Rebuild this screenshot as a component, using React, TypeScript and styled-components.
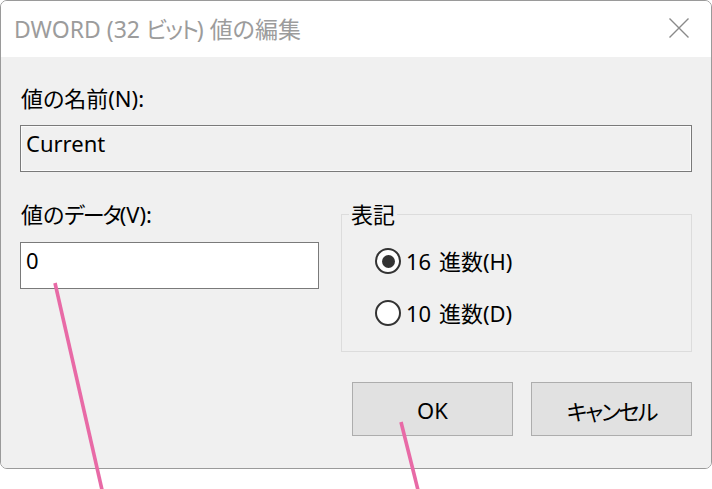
import React from 'react';
import styled, { createGlobalStyle } from 'styled-components';

const fontStack = `"Noto Sans", "Noto Sans CJK JP", sans-serif`;

const GlobalStyle = createGlobalStyle`
  html, body {
    margin: 0;
    padding: 0;
    background: #fff;
  }
  body {
    font-family: ${fontStack};
  }
`;

interface RadioProps {
  checked?: boolean;
}

interface FieldProps {
  readOnly?: boolean;
}

// 注釈線を重ねるための土台
const StyledPage = styled.div`
  position: relative;
  width: 712px;
  height: 489px;
  background: #fff;
  overflow: hidden;
`;

const StyledWindow = styled.div`
  box-sizing: border-box;
  width: 712px;
  height: 469px;
  border: 1px solid #9a9a9a;
  border-radius: 7px;
  overflow: hidden;
  display: flex;
  flex-direction: column;
  font-family: ${fontStack};
  font-size: 22px;
  font-feature-settings: "palt";
  color: #000;
`;

const StyledTitleBar = styled.div`
  flex: none;
  height: 56px;
  background: #fff;
  display: flex;
  align-items: center;
  justify-content: space-between;
  padding: 0 22px 0 13px;
`;

const StyledTitle = styled.span`
  color: #9c9c9c;
  font-size: 23px;
  line-height: 28px;
`;

// カタカナ部分の字詰め（Yu Gothic UI に近い幅にする）
const StyledKana = styled.span`
  letter-spacing: -2px;
`;

const StyledCloseButton = styled.span`
  display: flex;
  width: 20px;
  height: 20px;
  margin-top: -2px;
`;

const StyledBody = styled.div`
  flex: 1;
  background: #f0f0f0;
  padding: 27px 19px 0 19px;
  display: flex;
  flex-direction: column;
`;

const StyledLabel = styled.div`
  line-height: 28px;
  height: 28px;
  padding-left: 1px;
`;

const StyledField = styled.input<FieldProps>`
  box-sizing: border-box;
  display: block;
  width: 100%;
  height: 47px;
  margin: 0;
  margin-top: ${(props) => (props.readOnly ? '13px' : '14px')};
  padding: 0 5px 12px;
  border: 1px solid #7a7a7a;
  border-radius: 0;
  outline: none;
  background: ${(props) => (props.readOnly ? '#f0f0f0' : '#fff')};
  box-shadow: ${(props) => (props.readOnly ? 'inset 0 0 0 1px #fbfbfb' : 'none')};
  font: inherit;
  line-height: 28px;
  font-feature-settings: "palt";
  color: #000;
`;

const StyledColumns = styled.div`
  display: grid;
  grid-template-columns: 299px 351px;
  column-gap: 22px;
  align-items: start;
  margin-top: 28px;
`;

const StyledColumn = styled.div`
  display: flex;
  flex-direction: column;
`;

const StyledGroup = styled.fieldset`
  margin: 0;
  padding: 0;
  min-width: 0;
  border: 1px solid #dcdcdc;
`;

const StyledLegend = styled.legend`
  margin-left: 7px;
  padding: 0 2px;
  line-height: 28px;
`;

const StyledRadioList = styled.div`
  display: flex;
  flex-direction: column;
  gap: 24px;
  padding: 19px 0 24px 33px;
`;

const StyledRadioRow = styled.label`
  display: flex;
  align-items: center;
  gap: 5px;
  height: 28px;
  line-height: 28px;
  word-spacing: 2px;
`;

const StyledRadioMark = styled.span<RadioProps>`
  position: relative;
  flex: none;
  box-sizing: border-box;
  width: 26px;
  height: 26px;
  border: 2px solid #333;
  border-radius: 50%;
  background: #fff;

  &::after {
    content: '';
    display: ${(props) => (props.checked ? 'block' : 'none')};
    position: absolute;
    left: 50%;
    top: 50%;
    width: 13px;
    height: 13px;
    margin: -6.5px 0 0 -6.5px;
    border-radius: 50%;
    background: #333;
  }
`;

const StyledButtonRow = styled.div`
  display: flex;
  justify-content: flex-end;
  gap: 18px;
  margin-top: 30px;
`;

const StyledButton = styled.button`
  box-sizing: border-box;
  width: 161px;
  height: 54px;
  margin: 0;
  padding: 2px 0 0;
  border: 1px solid #adadad;
  border-radius: 0;
  background: #e1e1e1;
  font: inherit;
  font-feature-settings: "palt";
  color: #000;
`;

const StyledAnnotation = styled.svg`
  position: absolute;
  left: 0;
  top: 0;
  pointer-events: none;
`;

const CloseIcon = () => (
  <svg width='20' height='20' viewBox='0 0 20 20'>
    <path d='M0.5 0.5 L19.5 19.5 M19.5 0.5 L0.5 19.5' stroke='#8a8a8a' strokeWidth='1.4' fill='none' />
  </svg>
);

const Radio = ({ checked, label }: { checked?: boolean; label: string }) => (
  <StyledRadioRow>
    <StyledRadioMark checked={checked} />
    <span>{label}</span>
  </StyledRadioRow>
);

const App = () => {
  return (
    <>
      <GlobalStyle />
      <StyledPage>
        <StyledWindow>
          <StyledTitleBar>
            <StyledTitle>DWORD (32 <StyledKana>ビット</StyledKana>) 値の編集</StyledTitle>
            <StyledCloseButton>
              <CloseIcon />
            </StyledCloseButton>
          </StyledTitleBar>
          <StyledBody>
            <StyledLabel>値の名前(N):</StyledLabel>
            <StyledField readOnly value='Current' />
            <StyledColumns>
              <StyledColumn>
                <StyledLabel>値の<StyledKana>データ</StyledKana>(V):</StyledLabel>
                <StyledField value='0' onChange={() => undefined} />
              </StyledColumn>
              <StyledGroup>
                <StyledLegend>表記</StyledLegend>
                <StyledRadioList>
                  <Radio checked label='16 進数(H)' />
                  <Radio label='10 進数(D)' />
                </StyledRadioList>
              </StyledGroup>
            </StyledColumns>
            <StyledButtonRow>
              <StyledButton>OK</StyledButton>
              <StyledButton>
                <StyledKana>キャンセル</StyledKana>
              </StyledButton>
            </StyledButtonRow>
          </StyledBody>
        </StyledWindow>
        <StyledAnnotation width='712' height='489' viewBox='0 0 712 489'>
          <line x1='55' y1='283' x2='102.5' y2='492' stroke='#e86aa6' strokeWidth='3.6' />
          <line x1='401' y1='422' x2='418.5' y2='492' stroke='#e86aa6' strokeWidth='3.6' />
        </StyledAnnotation>
      </StyledPage>
    </>
  );
};

export default App;
